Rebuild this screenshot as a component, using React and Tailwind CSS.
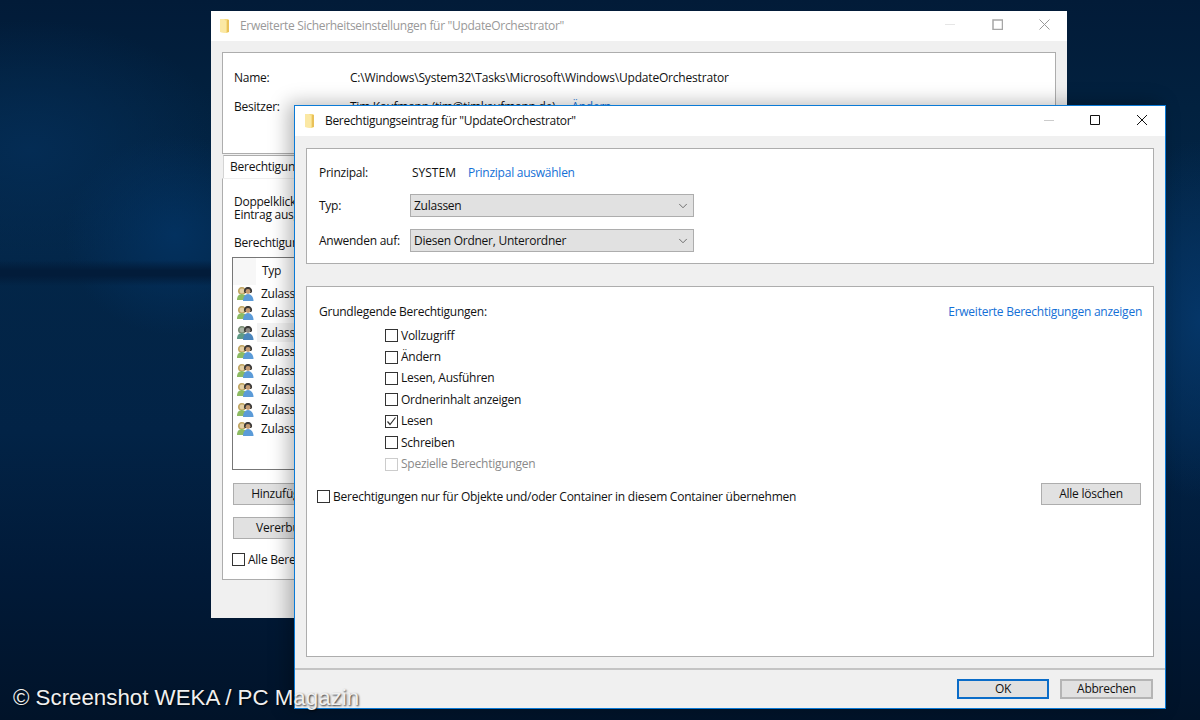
import { ChevronDown } from "lucide-react";

const font = "font-['Open_Sans','Noto_Sans',sans-serif]";

const FolderIcon = ({ className }) => (
  <svg width="12" height="16" viewBox="0 0 12 16" className={className}>
    <path d="M1 1h8l1 1v12l-2 1-7-1z" fill="#f6dc82" />
    <path d="M1 1h4l2 2v12l-6-1z" fill="#fbe8a4" />
    <path d="M8 2h2v12H8z" fill="#e9c15a" />
  </svg>
);

const UsersIcon = ({ dim }) => (
  <svg width="17" height="16" viewBox="0 0 17 16" className="shrink-0">
    <path d="M1 6c-.4-3 1.400-5 4-5s4.200 2 4 5l-1 2H2z" fill={dim ? "#7d8f78" : "#c2a766"} />
    <circle cx="5" cy="5" r="2.400" fill={dim ? "#a9b5a6" : "#e3cfa4"} />
    <path d="M0 14c0-4 2-6 5-6 2 0 3 1 4 2v4z" fill={dim ? "#5f9a86" : "#8dbb62"} />
    <path d="M7 6c-.4-3 1.400-5 4-5s4.400 2 4 5l-1 1H8z" fill="#3d3a38" />
    <circle cx="11" cy="5.500" r="2.400" fill={dim ? "#8d8a84" : "#c49a72"} />
    <path d="M6 15c0-4 2-7 5-7s5.500 3 5.500 7z" fill={dim ? "#4a86bd" : "#5b9bd8"} />
  </svg>
);

const Checkbox = ({ checked, disabled }) => (
  <span
    className={`flex h-[13px] w-[13px] shrink-0 items-center justify-center border bg-white ${
      disabled ? "border-[#cccccc]" : "border-[#333333]"
    }`}
  >
    {checked && (
      <svg width="11" height="11" viewBox="0 0 11 11">
        <path d="M1.500 5.500 4 8.500 9.500 1.500" fill="none" stroke="#333333" strokeWidth="1.2" />
      </svg>
    )}
  </span>
);

const Button = ({ children, className = "", border = "border border-[#adadad]" }) => (
  <div className={`flex items-center justify-center bg-[#e1e1e1] text-[#111111] ${border} ${className}`}>
    {children}
  </div>
);

const Select = ({ value }) => (
  <div className="flex h-[23px] w-[284px] items-center justify-between border border-[#adadad] bg-[#e1e1e1] px-[3px]">
    <span>{value}</span>
    <ChevronDown size={14} strokeWidth={1.25} className="text-[#444444]" />
  </div>
);

const TitleBar = ({ title, active }) => (
  <div
    className={`flex h-[30px] shrink-0 items-center bg-white tracking-[-0.31px] ${
      active ? "text-[#111111]" : "text-[#999999]"
    }`}
  >
    <FolderIcon className={active ? "ml-[9px]" : "ml-[8px]"} />
    <span className="ml-[9px] flex-1">{title}</span>
    {active ? (
      <>
        <svg width="10" height="1" viewBox="0 0 10 1" className="mr-[36px] -mt-[2px]">
          <path d="M0 .5h10" stroke="#cccccc" />
        </svg>
        <svg width="10" height="10" viewBox="0 0 10 10" className="mr-[37px] -mt-[2px]">
          <path d="M.5.5h9v9h-9z" fill="none" stroke="#111111" />
        </svg>
        <svg width="10" height="10" viewBox="0 0 10 10" className="mr-[18px] -mt-[2px]">
          <path d="M0 0l10 10M10 0 0 10" stroke="#111111" />
        </svg>
      </>
    ) : (
      <>
        <svg width="10" height="1" viewBox="0 0 10 1" className="mr-[37px] -mt-[3px]">
          <path d="M0 .5h10" stroke="#e6e6e6" />
        </svg>
        <svg width="11" height="11" viewBox="0 0 11 11" className="mr-[36px] -mt-[3px]">
          <path d="M1 1h9.500v9.500H1z" fill="none" stroke="#a6a6a6" strokeWidth="1.500" />
        </svg>
        <svg width="11" height="11" viewBox="0 0 11 11" className="mr-[17px] -mt-[3px]">
          <path d="M.5.5l10 10M10.500.5l-10 10" stroke="#999999" />
        </svg>
      </>
    )}
  </div>
);

const basics = ["Vollzugriff", "Ändern", "Lesen, Ausführen", "Ordnerinhalt anzeigen", "Lesen", "Schreiben"];

export default function App() {
  return (
    <div
      className={`${font} relative h-[720px] w-[1200px] overflow-hidden bg-[#011d3f] bg-[radial-gradient(ellipse_110px_100px_at_175px_235px,#03315f_0%,transparent_100%),radial-gradient(ellipse_90px_180px_at_1200px_320px,#053668_0%,transparent_100%),radial-gradient(ellipse_200px_130px_at_30px_150px,#042c54_0%,transparent_100%),linear-gradient(180deg,#021b38_0%,#02213f_15%,#032648_35%,#022346_60%,#011a38_80%,#011329_100%)] text-[12px] leading-none tracking-[-0.25px] text-[#111111]`}
    >
      {/* dunkler Streifen im Hintergrundbild */}
      <div className="absolute left-0 top-[260px] h-[26px] w-[215px] bg-[linear-gradient(180deg,transparent,#021c3a_40%,#021c3a_60%,transparent)]" />

      {/* hinteres Fenster */}
      <div className="absolute left-[211px] top-[11px] flex h-[607px] w-[856px] flex-col bg-[#f0f0f0]">
        <TitleBar title={'Erweiterte Sicherheitseinstellungen für "UpdateOrchestrator"'} />
        <div className="mx-[11px] mt-[11px] flex h-[102px] flex-col border border-[#adadad] bg-white pl-[11px]">
          <div className="mt-[19px] flex">
            <span className="w-[116px]">Name:</span>
            <span className="tracking-[-0.19px]">C:\Windows\System32\Tasks\Microsoft\Windows\UpdateOrchestrator</span>
          </div>
          <div className="mt-[17px] flex">
            <span className="w-[116px]">Besitzer:</span>
            <span>Tim Kaufmann (tim@timkaufmann.de)</span>
            <span className="ml-[16px] text-[#1470d6]">Ändern</span>
          </div>
        </div>
        <div className="ml-[12px] mt-[1px] h-[23px] w-[120px] border-l border-t border-l-[#d4d4d4] border-t-[#adadad] bg-white pl-[6px] pt-[5px]">
          Berechtigungen
        </div>
        <div className="mx-[11px] flex h-[402px] flex-col border border-[#adadad] border-t-[#efefef] bg-white pl-[11px]">
          <div className="mt-[16px] leading-[13px]">
            Doppelklicken Sie auf einen
            <br />
            Eintrag aus, um ihn zu ändern
          </div>
          <div className="mt-[16px]">Berechtigungseinträge:</div>
          <div className="-ml-[2px] mt-[8px] flex h-[213px] w-[700px] flex-col border border-r-0 border-[#777777] pl-[4px]">
            <div className="-ml-[4px] flex h-[26.5px] shrink-0">
              <div className="w-[23px] bg-[#f7f7f7]" />
              <div className="pl-[6px] pt-[7px]">Typ</div>
            </div>
            {[0, 1, 2, 3, 4, 5, 6, 7].map((i) => (
              <div key={i} className="flex h-[19.25px] shrink-0 items-center">
                <UsersIcon dim={i === 2} />
                <span className={`ml-[3px] flex h-full flex-1 items-center pl-[4px] ${i === 2 ? "bg-[#f3f3f3]" : ""}`}>
                  Zulassen
                </span>
              </div>
            ))}
          </div>
          <Button className="-ml-[1px] mt-[13px] h-[22px] w-[98px]">Hinzufügen</Button>
          <Button className="-ml-[1px] mt-[12px] h-[22px] w-[172px]">Vererbung deaktivieren</Button>
          <div className="-ml-[2px] mt-[14px] flex items-center gap-[3px]">
            <Checkbox />
            <span>Alle Berechtigungseinträge</span>
          </div>
        </div>
      </div>

      {/* vorderes Fenster */}
      <div className="absolute left-[294px] top-[105px] flex h-[604px] w-[872px] flex-col border border-[#0a7ad6] bg-[#f0f0f0] shadow-[-6px_-2px_18px_rgba(0,0,0,0.28)]">
        <TitleBar title={'Berechtigungseintrag für "UpdateOrchestrator"'} active />
        <div className="mx-[11px] mt-[12px] flex h-[116px] shrink-0 flex-col border border-[#adadad] bg-white pl-[12px]">
          <div className="mt-[18px] flex">
            <span className="w-[93px]">Prinzipal:</span>
            <span className="tracking-[0px]">SYSTEM</span>
            <span className="ml-[12px] text-[#1470d6]">Prinzipal auswählen</span>
          </div>
          <div className="mt-[15px] flex items-center">
            <span className="w-[91px]">Typ:</span>
            <Select value="Zulassen" />
          </div>
          <div className="mt-[12px] flex items-center">
            <span className="w-[91px]">Anwenden auf:</span>
            <Select value="Diesen Ordner, Unterordner" />
          </div>
        </div>
        <div className="mx-[11px] mt-[22px] flex h-[371px] shrink-0 flex-col border border-[#adadad] bg-white pl-[12px] pr-[11px]">
          <div className="mt-[19px] flex justify-between">
            <span>Grundlegende Berechtigungen:</span>
            <span className="text-[#1470d6]">Erweiterte Berechtigungen anzeigen</span>
          </div>
          <div className="mt-[7px] flex flex-col pl-[66px]">
            {basics.map((label) => (
              <div key={label} className="flex h-[21.4px] items-center gap-[3px]">
                <Checkbox checked={label === "Lesen"} />
                <span>{label}</span>
              </div>
            ))}
            <div className="flex h-[21.4px] items-center gap-[3px] text-[#8a8a8a]">
              <Checkbox disabled />
              <span>Spezielle Berechtigungen</span>
            </div>
          </div>
          <div className="-ml-[2px] mr-[1px] mt-[8px] flex items-start">
            <div className="mt-[3px] flex h-[22px] flex-1 items-center gap-[3px]">
              <Checkbox />
              <span>Berechtigungen nur für Objekte und/oder Container in diesem Container übernehmen</span>
            </div>
            <Button className="h-[22px] w-[100px]">Alle löschen</Button>
          </div>
        </div>
        <div className="mt-[11px] flex flex-1 items-center justify-end gap-[11px] border-t-2 border-[#c4c4c4] pr-[12px]">
          <Button border="border-2 border-[#0a6cc8]" className="h-[20px] w-[92px]">
            OK
          </Button>
          <Button border="border-2 border-[#b5b5b5]" className="h-[20px] w-[93px]">
            Abbrechen
          </Button>
        </div>
      </div>

      <div className="absolute bottom-[11px] left-[13px] font-['Liberation_Sans',sans-serif] text-[22.3px] leading-none tracking-normal text-[#f0f0f0] [text-shadow:1px_1px_2px_rgba(0,0,0,0.8)]">
        © Screenshot WEKA / PC Magazin
      </div>
    </div>
  );
}
